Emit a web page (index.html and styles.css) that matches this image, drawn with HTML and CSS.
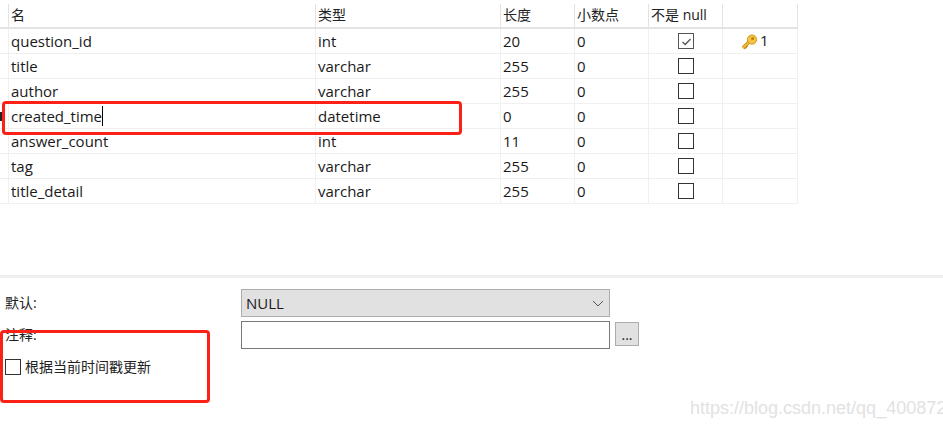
FILE: index.html
```html
<!DOCTYPE html>
<html lang="zh">
<head>
<meta charset="utf-8">
<title>表设计</title>
<link rel="stylesheet" href="styles.css">
</head>
<body>
<div class="page">
  <section class="fields">
    <div class="row head">
      <div class="stub"></div><div class="c">名</div><div class="c">类型</div><div class="c">长度</div><div class="c">小数点</div><div class="c">不是 null</div><div class="c"></div>
    </div>
    <div class="row">
      <div class="stub"></div><div class="c">question_id</div><div class="c">int</div><div class="c">20</div><div class="c">0</div>
      <div class="c center"><span class="box checked"><svg width="13" height="13" viewBox="0 0 13 13"><path d="M2.5 7 L5.2 9.5 L10.5 4" fill="none" stroke="#555" stroke-width="1.3"/></svg></span></div>
      <div class="c keycell"><svg class="key" width="17" height="17" viewBox="0 0 17 17"><path d="M2 14 L8 8" stroke="#c98d10" stroke-width="3.6" fill="none"/><path d="M2 14 L8 8" stroke="#f6c445" stroke-width="1.6" fill="none"/><path d="M3.6 14.8 L5.5 13 M5.4 13 L6.6 11.8" stroke="#c98d10" stroke-width="1.4" fill="none"/><circle cx="11" cy="5.6" r="4.6" fill="#f6c445" stroke="#d39a18"/><circle cx="11.6" cy="4.6" r="1.5" fill="#b9820f"/></svg><span>1</span></div>
    </div>
    <div class="row"><div class="stub"></div><div class="c">title</div><div class="c">varchar</div><div class="c">255</div><div class="c">0</div><div class="c center"><span class="box"></span></div><div class="c"></div></div>
    <div class="row"><div class="stub"></div><div class="c">author</div><div class="c">varchar</div><div class="c">255</div><div class="c">0</div><div class="c center"><span class="box"></span></div><div class="c"></div></div>
    <div class="row current"><div class="stub"><span class="marker"></span></div><div class="c"><span class="caret">created_time</span></div><div class="c">datetime</div><div class="c">0</div><div class="c">0</div><div class="c center"><span class="box"></span></div><div class="c"></div></div>
    <div class="row"><div class="stub"></div><div class="c">answer_count</div><div class="c">int</div><div class="c">11</div><div class="c">0</div><div class="c center"><span class="box"></span></div><div class="c"></div></div>
    <div class="row"><div class="stub"></div><div class="c">tag</div><div class="c">varchar</div><div class="c">255</div><div class="c">0</div><div class="c center"><span class="box"></span></div><div class="c"></div></div>
    <div class="row"><div class="stub"></div><div class="c">title_detail</div><div class="c">varchar</div><div class="c">255</div><div class="c">0</div><div class="c center"><span class="box"></span></div><div class="c"></div></div>
  </section>

  <section class="props">
    <div class="prop first">
      <div class="label">默认:</div>
      <div class="select"><span>NULL</span><svg width="12" height="7" viewBox="0 0 12 7"><path d="M1 1 L6 6 L11 1" fill="none" stroke="#555" stroke-width="1"/></svg></div>
    </div>
    <div class="prop second">
      <div class="label">注释:</div>
      <div class="input"></div>
      <div class="more">...</div>
    </div>
    <label class="update"><span class="box"></span><span>根据当前时间戳更新</span></label>
  </section>

  <div class="mark mark-row"></div>
  <div class="mark mark-panel"></div>
  <div class="watermark">https://blog.csdn.net/qq_40087229</div>
</div>
</body>
</html>
```

FILE: styles.css
```css
* { box-sizing: border-box; }
html, body { margin: 0; padding: 0; background: #fff; }
.page {
  position: relative;
  width: 943px;
  height: 427px;
  overflow: hidden;
  font-family: "Open Sans", "Noto Sans CJK SC", sans-serif;
  font-size: 15px;
  color: #1a1a1a;
}
.fields { padding-top: 4px; width: 798px; }
.row {
  display: grid;
  grid-template-columns: 9px 307px 185px 74px 74px 74px 75px;
  height: 25px;
  border-bottom: 1px solid #f0f0f0;
}
.row.head { height: 25px; border-bottom: 2px solid #e3e3e3; }
.stub { position: relative; border-right: 1px solid #f0f0f0; }
.c {
  border-right: 1px solid #f0f0f0;
  padding-left: 2px;
  line-height: 24px;
  white-space: nowrap;
}
.head .c { border-right-color: #e3e3e3; font-size: 14px; color: #222; line-height: 22px; }
.head .stub { border-right-color: #e3e3e3; }
.center { display: flex; align-items: center; justify-content: center; padding-left: 0; }
.box {
  display: block;
  width: 16px;
  height: 16px;
  border: 1px solid #333;
  background: #fff;
  flex: none;
}
.box.checked { border-color: #555; }
.box svg { display: block; margin: 1px; }
.keycell { display: flex; align-items: center; padding-left: 18px; line-height: 20px; }
.key { flex: none; margin-top: 2px; }
.keycell span { margin-top: -2px; margin-left: 2px; }
.caret { border-right: 1px solid #000; padding-right: 0; }
.marker {
  position: absolute;
  left: 0;
  top: 8px;
  width: 2px;
  height: 9px;
  background: #222;
}

.props {
  margin-top: 71px;
  border-top: 3px solid #f0f0f0;
  padding: 11px 0 0 5px;
}
.prop { display: flex; align-items: flex-start; }
.label { width: 236px; flex: none; font-size: 14px; line-height: 28px; color: #222; }
.select {
  width: 369px;
  height: 28px;
  border: 1px solid #adadad;
  background: #e1e1e1;
  display: flex;
  align-items: center;
  justify-content: space-between;
  padding: 0 5px 0 4px;
}
.second { margin-top: 4px; }
.second .label { line-height: 24px; padding-top: 2px; }
.input {
  width: 369px;
  height: 28px;
  border: 1px solid #7a7a7a;
  background: #fff;
}
.more {
  width: 24px;
  height: 24px;
  margin: 1px 0 0 5px;
  border: 1px solid #adadad;
  background: #e1e1e1;
  text-align: center;
  line-height: 24px;
  font-size: 14px;
}
.update {
  display: flex;
  align-items: center;
  gap: 4px;
  margin-top: 9px;
  font-size: 14px;
  line-height: 18px;
  color: #222;
}

.mark {
  position: absolute;
  border: 3px solid #fb2117;
  border-radius: 4px;
}
.mark-row { left: 2px; top: 101px; width: 460px; height: 34px; }
.mark-panel { left: 0; top: 330px; width: 210px; height: 73px; }
.watermark {
  position: absolute;
  left: 690px;
  top: 397px;
  font-family: "Liberation Sans", sans-serif;
  font-size: 18px;
  line-height: 22px;
  color: #e2e2e2;
  white-space: nowrap;
}
```
